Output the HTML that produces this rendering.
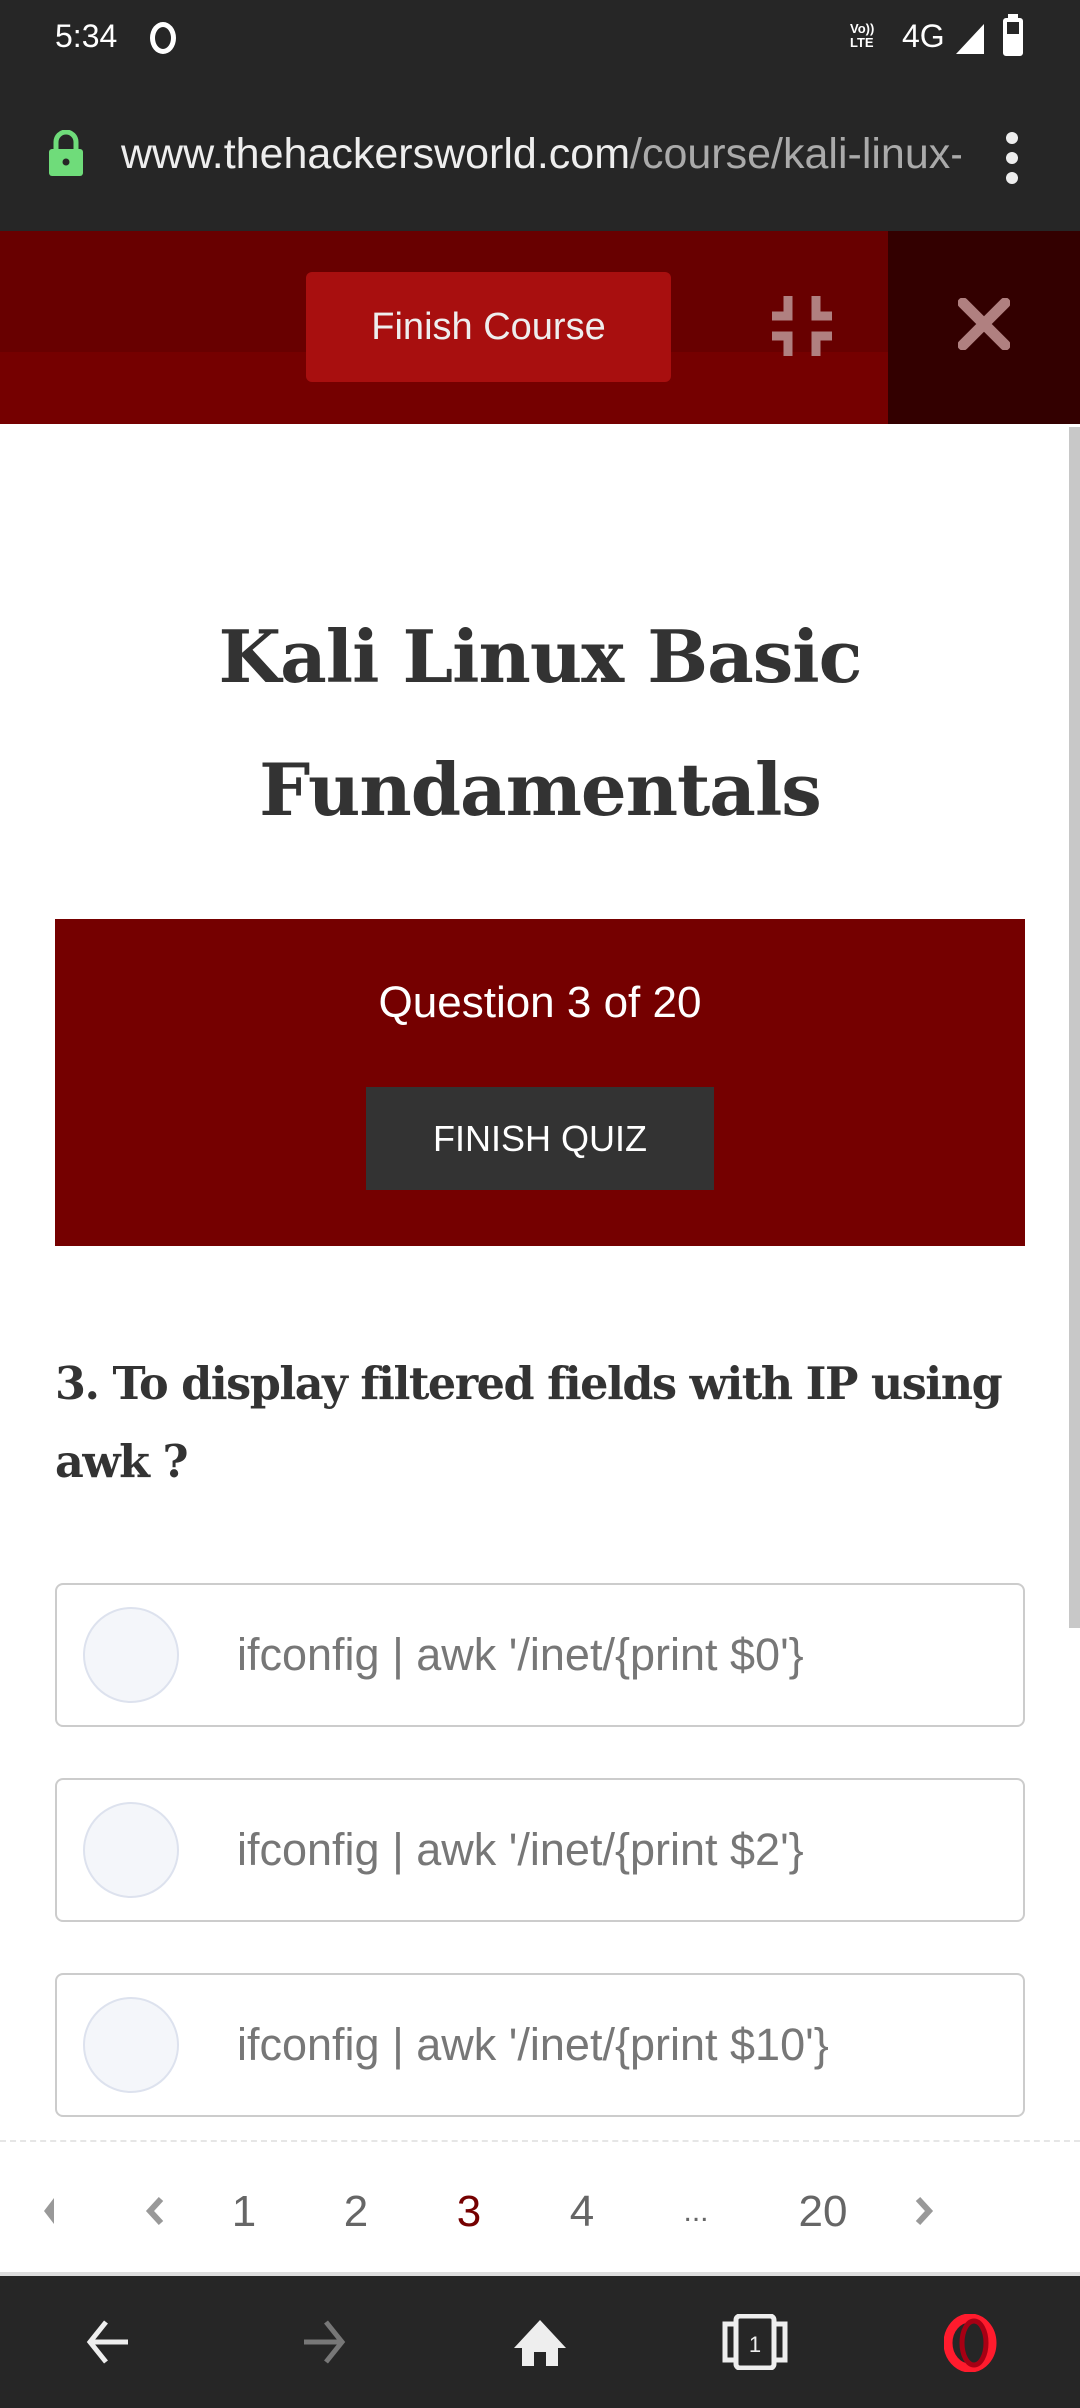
<!DOCTYPE html>
<html><head><meta charset="utf-8">
<style>
*{margin:0;padding:0;box-sizing:border-box}
body{width:1080px;height:2408px;position:relative;overflow:hidden;background:#fff;font-family:"Liberation Sans",sans-serif}
.abs{position:absolute}
.top{left:0;top:0;width:1080px;height:231px;background:#262626}
.red{left:0;top:231px;width:1080px;height:193px;background:#750000}
.red1{left:0;top:231px;width:888px;height:121px;background:#680000}
.dark{left:888px;top:231px;width:192px;height:193px;background:#330000}
.fbtn{left:306px;top:272px;width:365px;height:110px;background:#a80f0f;border-radius:6px;color:#eee;font-size:38px;display:flex;align-items:center;justify-content:center}
.title{left:0;width:1080px;text-align:center;font-family:"DejaVu Serif",serif;font-weight:bold;color:#333;font-size:72px;letter-spacing:-1px}
.qbox{left:55px;top:919px;width:970px;height:327px;background:#750000}
.qt{left:55px;top:978px;width:970px;text-align:center;color:#fff;font-size:44px}
.fq{left:366px;top:1087px;width:348px;height:103px;background:#333;color:#fff;font-size:36px;display:flex;align-items:center;justify-content:center}
.q{left:55px;font-family:"DejaVu Serif",serif;font-weight:bold;color:#333;font-size:44.5px;letter-spacing:-1.5px;white-space:nowrap}
.opt{left:55px;width:970px;height:144px;border:2px solid #ccc;border-radius:8px}
.opt .c{position:absolute;left:26px;top:22px;width:96px;height:96px;border-radius:50%;background:#f4f6fa;border:2px solid #dde2ee}
.opt .t{position:absolute;left:180px;top:0;height:140px;line-height:140px;color:#777;font-size:45px;white-space:nowrap}
.pg{top:2180px;font-size:44px;color:#666;height:64px;line-height:64px;transform:translateX(-50%)}
</style></head><body>
<div class="abs top"></div>
<div class="abs" style="left:55px;top:18px;color:#fff;font-size:32px">5:34</div>
<div class="abs" style="left:150px;top:22px;width:26px;height:32px;border:5px solid #fff;border-radius:50%"></div>
<div class="abs" style="left:850px;top:22px;color:#fff;font-size:13px;line-height:14px;font-weight:bold">Vo))<br>LTE</div>
<div class="abs" style="left:902px;top:18px;color:#fff;font-size:32px">4G</div>
<svg class="abs" style="left:956px;top:24px" width="30" height="30"><path d="M28 0V30H0Z" fill="#fff"/></svg>
<div class="abs" style="left:1003px;top:18px;width:20px;height:38px;border:4px solid #fff;border-radius:3px;background:linear-gradient(#262626 40%,#fff 40%)"></div>
<div class="abs" style="left:1008px;top:14px;width:10px;height:5px;background:#fff"></div>
<svg class="abs" style="left:48px;top:130px" width="36" height="46"><path d="M8 20V12a10 10 0 0 1 20 0v8" stroke="#6fdc7a" stroke-width="5" fill="none"/><rect x="1" y="19" width="34" height="27" rx="3" fill="#6fdc7a"/><circle cx="18" cy="32" r="3.5" fill="#262626"/></svg>
<div class="abs" style="left:121px;top:130px;font-size:43px;color:#eee;white-space:nowrap;width:840px;overflow:hidden">www.thehackersworld.com<span style="color:#aaa">/course/kali-linux-basic</span></div>
<div class="abs" style="left:1006px;top:132px;width:12px;height:12px;border-radius:50%;background:#eee;box-shadow:0 20px 0 #eee,0 40px 0 #eee"></div>
<div class="abs red"></div><div class="abs red1"></div><div class="abs dark"></div>
<div class="abs fbtn">Finish Course</div>
<svg class="abs" style="left:772px;top:296px" width="60" height="60"><path d="M16 0v20H0M44 0v20h16M16 60V40H0M44 60V40h16" stroke="#b08080" stroke-width="9" fill="none"/></svg>
<svg class="abs" style="left:958px;top:298px" width="52" height="52"><path d="M5 5L47 47M47 5L5 47" stroke="#b08080" stroke-width="11" stroke-linecap="round"/></svg>
<div class="abs" style="left:1069px;top:427px;width:11px;height:1201px;background:#c8c8c8"></div>
<div class="abs title" style="top:614px">Kali Linux Basic</div>
<div class="abs title" style="top:747px">Fundamentals</div>
<div class="abs qbox"></div>
<div class="abs qt">Question 3 of 20</div>
<div class="abs fq">FINISH QUIZ</div>
<div class="abs q" style="top:1358px">3. To display filtered fields with IP using</div>
<div class="abs q" style="top:1436px">awk ?</div>
<div class="abs opt" style="top:1583px"><div class="c"></div><div class="t">ifconfig | awk '/inet/{print $0'}</div></div>
<div class="abs opt" style="top:1778px"><div class="c"></div><div class="t">ifconfig | awk '/inet/{print $2'}</div></div>
<div class="abs opt" style="top:1973px"><div class="c"></div><div class="t">ifconfig | awk '/inet/{print $10'}</div></div>
<div class="abs" style="left:0;top:2140px;width:1080px;border-top:2px dashed #e6e6e6"></div>
<svg class="abs" style="left:42px;top:2198px" width="14" height="26"><path d="M12 0V26L2 13Z" fill="#999"/></svg>
<svg class="abs" style="left:145px;top:2196px" width="20" height="30"><path d="M16 3L5 15l11 12" stroke="#999" stroke-width="6" fill="none"/></svg>
<div class="abs pg" style="left:244px">1</div>
<div class="abs pg" style="left:356px">2</div>
<div class="abs pg" style="left:469px;color:#750000">3</div>
<div class="abs pg" style="left:582px">4</div>
<div class="abs pg" style="left:696px;font-size:30px">...</div>
<div class="abs pg" style="left:823px">20</div>
<svg class="abs" style="left:914px;top:2196px" width="20" height="30"><path d="M4 3l11 12L4 27" stroke="#999" stroke-width="6" fill="none"/></svg>
<div class="abs" style="left:0;top:2272px;width:1080px;height:136px;background:#262626;border-top:4px solid #ddd"></div>
<svg class="abs" style="left:84px;top:2318px" width="48" height="48"><path d="M22 4L6 24l16 20M6 24h38" stroke="#eee" stroke-width="5" fill="none"/></svg>
<svg class="abs" style="left:300px;top:2318px" width="48" height="48"><path d="M26 4l16 20-16 20M42 24H4" stroke="#777" stroke-width="5" fill="none"/></svg>
<svg class="abs" style="left:512px;top:2318px" width="56" height="48"><path d="M28 2L2 30h8v18h12V34h12v14h12V30h8Z" fill="#eee"/></svg>
<svg class="abs" style="left:722px;top:2314px" width="66" height="56"><rect x="14" y="2" width="38" height="52" rx="4" fill="none" stroke="#eee" stroke-width="5"/><path d="M12 10H3v36h9M54 10h9v36h-9" fill="none" stroke="#eee" stroke-width="5"/><text x="33" y="38" font-size="22" fill="#eee" text-anchor="middle" font-family="Liberation Sans">1</text></svg>
<svg class="abs" style="left:944px;top:2314px" width="56" height="58"><ellipse cx="26" cy="29" rx="22" ry="25" fill="none" stroke="#ff1b2d" stroke-width="9"/><ellipse cx="30" cy="29" rx="12" ry="22" fill="none" stroke="#a70014" stroke-width="5"/></svg>
</body></html>
